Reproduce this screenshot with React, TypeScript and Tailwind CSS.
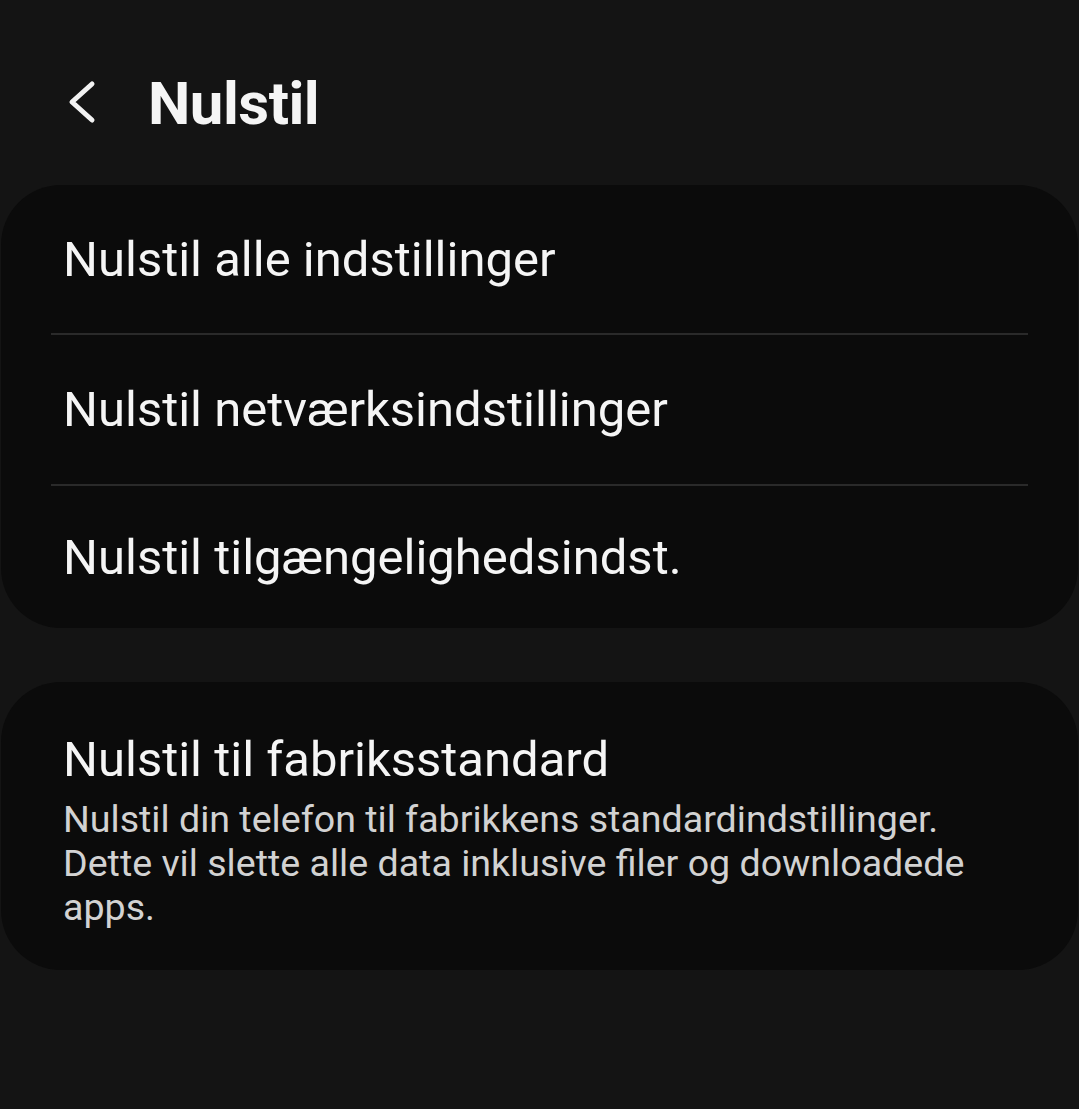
import React from 'react'

const rows = [
    { label: 'Nulstil alle indstillinger', h: 'h-[148px]' },
    { label: 'Nulstil netværksindstillinger', h: 'h-[149px]' },
    { label: 'Nulstil tilgængelighedsindst.', h: 'h-[142px]' },
]

const ChevronLeft = () => (
    <svg width="36" height="48" viewBox="0 0 36 48" fill="none">
        <path
            d="M27 6 L7 24 L27 42"
            stroke="#f2f2f2"
            strokeWidth="5"
            strokeLinecap="round"
            strokeLinejoin="round"
        />
    </svg>
)

const App: React.FC = () => {
    return (
        <div
            className="w-[1079px] h-[1109px] bg-[#141414] text-[#f5f5f5] overflow-hidden"
            style={{ fontFamily: 'Roboto, "Noto Sans", sans-serif' }}
        >
            {/* header */}
            <div className="flex items-center pt-[74px] pb-[51px]">
                <div className="w-[148px] flex justify-start pl-[65px] mt-[-4px]">
                    <ChevronLeft />
                </div>
                <h1 className="text-[60px] font-bold leading-[60px] tracking-[-0.5px]">
                    Nulstil
                </h1>
            </div>

            {/* card 1 */}
            <div className="bg-[#0b0b0b] rounded-[60px] mx-[1px]">
                {rows.map((row, i) => (
                    <div key={row.label}>
                        {i > 0 && (
                            <div className="mx-[50px] h-[2px] bg-[#2a2a2a]" />
                        )}
                        <div className={`${row.h} flex items-center px-[62px] text-[49px] leading-none`}>
                            {row.label}
                        </div>
                    </div>
                ))}
            </div>

            {/* card 2 */}
            <div className="mt-[54px] bg-[#0b0b0b] rounded-[60px] mx-[1px] pl-[62px] pr-[86px] pt-[50px] pb-[41px]">
                <div className="text-[49px] leading-[56px]">
                    Nulstil til fabriksstandard
                </div>
                <p className="mt-[9px] text-[37.6px] leading-[44px] text-[#d2d2d2]">
                    Nulstil din telefon til fabrikkens standardindstillinger.
                    Dette vil slette alle data inklusive filer og downloadede
                    apps.
                </p>
            </div>
        </div>
    )
}

export default App
